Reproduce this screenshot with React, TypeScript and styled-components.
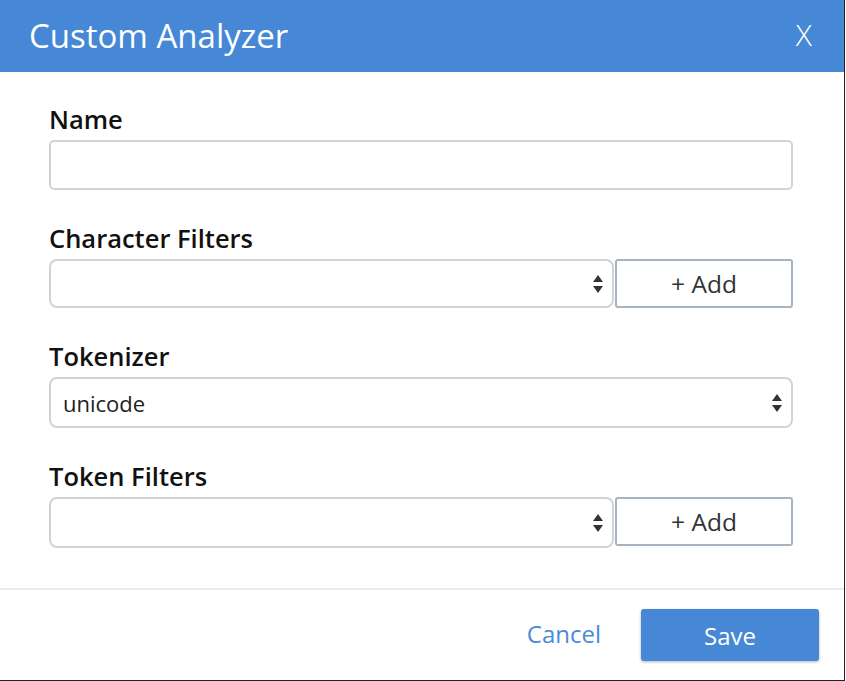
import React from "react";
import styled, { createGlobalStyle } from "styled-components";

const Global = createGlobalStyle`
  html, body { margin: 0; padding: 0; background: #ffffff; }
  body { font-family: "Open Sans", "Noto Sans", sans-serif; }
  * { box-sizing: border-box; }
`;

const Dialog = styled.div`
  width: 845px;
  height: 681px;
  background: #fff;
  border-right: 1px solid #222;
  border-bottom: 1px solid #222;
  display: flex;
  flex-direction: column;
`;

const Header = styled.header`
  height: 72px;
  flex: none;
  background: #4688d6;
  color: #fff;
  display: flex;
  align-items: center;
  justify-content: space-between;
  padding: 0 32px 0 29px;
`;

const Title = styled.h1`
  margin: 0 0 2px;
  font-size: 33px;
  font-weight: 400;
  letter-spacing: 0;
`;

const Close = styled.button`
  background: none;
  border: none;
  color: #fff;
  font-family: inherit;
  font-size: 30px;
  font-weight: 300;
  padding: 0;
  margin-bottom: 4px;
  cursor: pointer;
`;

const Body = styled.div`
  flex: 1;
  padding: 32px 51px 0 49px;
  display: flex;
  flex-direction: column;
  gap: 33px;
`;

const Field = styled.div`
  display: flex;
  flex-direction: column;
`;

const Label = styled.label`
  font-size: 25.5px;
  font-weight: 600;
  color: #111;
  line-height: 30px;
  margin-bottom: 6px;
`;

const Input = styled.input`
  height: 50px;
  width: 100%;
  border: 2px solid #d3d3d3;
  border-radius: 5px;
  font-family: inherit;
  font-size: 22px;
  padding: 0 12px;
`;

const Row = styled.div`
  display: flex;
`;

const SelectBox = styled.div<{ $tall?: boolean }>`
  flex: 1 0 auto;
  height: ${(p) => (p.$tall ? "51px" : "49px")};
  border: 2px solid #d3d3d3;
  border-radius: 8px;
  display: flex;
  align-items: center;
  justify-content: space-between;
  padding: 0 8px 0 12px;
  font-size: 22px;
  color: #222;
`;

const AddButton = styled.button`
  width: 178px;
  height: 49px;
  margin-left: 1px;
  border: 2px solid #a8b3c0;
  border-radius: 3px;
  background: #fff;
  font-family: inherit;
  font-size: 24.5px;
  color: #333;
`;

const Footer = styled.footer`
  height: 92px;
  flex: none;
  border-top: 2px solid #ebebeb;
  display: flex;
  align-items: center;
  justify-content: flex-end;
  padding: 0 25px 0 0;
  gap: 40px;
`;

const CancelLink = styled.button`
  background: none;
  border: none;
  color: #4a8ad6;
  font-family: inherit;
  font-size: 24px;
  padding: 0;
  margin-bottom: 4px;
`;

const SaveButton = styled.button`
  width: 178px;
  height: 52px;
  background: #4688d6;
  color: #fff;
  border: none;
  border-radius: 3px;
  box-shadow: 0 1px 3px rgba(0, 0, 0, 0.3);
  font-family: inherit;
  font-size: 24px;
`;

const Arrows = () => (
  <svg width="12" height="20" viewBox="0 0 12 20">
    <path d="M6 1 L11 8 L1 8 Z" fill="#333" />
    <path d="M6 19 L11 12 L1 12 Z" fill="#333" />
  </svg>
);

export default function App() {
  return (
    <>
      <Global />
      <Dialog>
        <Header>
          <Title>Custom Analyzer</Title>
          <Close>X</Close>
        </Header>
        <Body>
          <Field>
            <Label>Name</Label>
            <Input />
          </Field>
          <Field>
            <Label>Character Filters</Label>
            <Row>
              <SelectBox>
                <span />
                <Arrows />
              </SelectBox>
              <AddButton>+ Add</AddButton>
            </Row>
          </Field>
          <Field>
            <Label>Tokenizer</Label>
            <SelectBox $tall>
              <span>unicode</span>
              <Arrows />
            </SelectBox>
          </Field>
          <Field>
            <Label>Token Filters</Label>
            <Row>
              <SelectBox $tall>
                <span />
                <Arrows />
              </SelectBox>
              <AddButton>+ Add</AddButton>
            </Row>
          </Field>
        </Body>
        <Footer>
          <CancelLink>Cancel</CancelLink>
          <SaveButton>Save</SaveButton>
        </Footer>
      </Dialog>
    </>
  );
}
